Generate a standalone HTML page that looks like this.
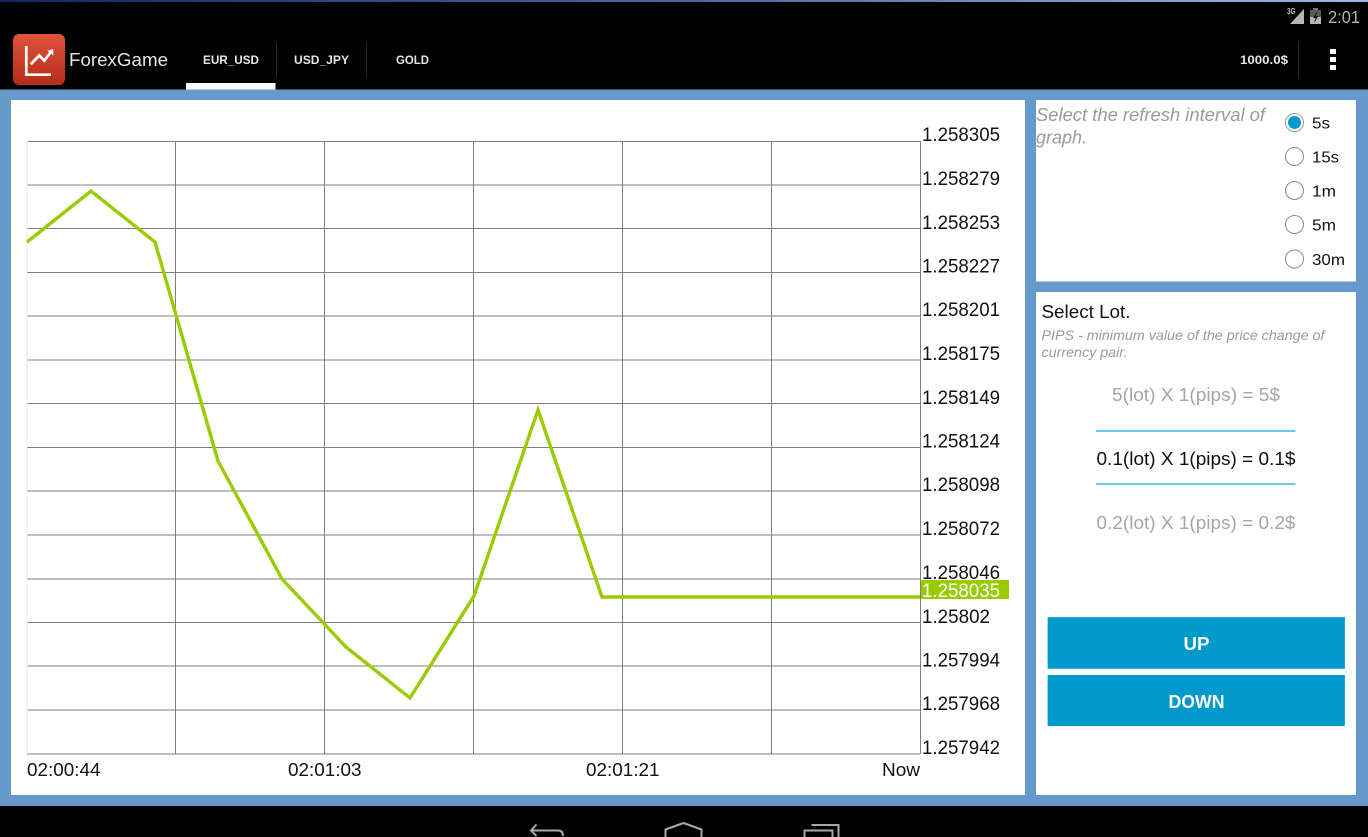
<!DOCTYPE html>
<html>
<head>
<meta charset="utf-8">
<style>
html,body{margin:0;padding:0;width:1368px;height:837px;overflow:hidden;background:#000}
svg{display:block;font-family:"Liberation Sans",sans-serif}
</style>
</head>
<body>
<svg width="1368" height="837" viewBox="0 0 1368 837" xmlns="http://www.w3.org/2000/svg">
<defs>
<linearGradient id="logo" x1="0" y1="0" x2="0" y2="1"><stop offset="0" stop-color="#e0533d"/><stop offset="1" stop-color="#b72c18"/></linearGradient>
<linearGradient id="strip" x1="0" y1="0" x2="1" y2="0"><stop offset="0" stop-color="#14265f"/><stop offset="0.5" stop-color="#456a9e"/><stop offset="1" stop-color="#93bde6"/></linearGradient>
</defs>
<rect width="1368" height="837" fill="#000"/>
<rect width="1368" height="2" fill="url(#strip)"/>

<!-- status bar -->
<text x="1287" y="14" font-size="8" font-weight="bold" fill="#c0c0c0" textLength="8.500" lengthAdjust="spacingAndGlyphs">3G</text>
<polygon points="1304,9 1304,24 1290,24" fill="#b5b5b5"/>
<rect x="1310" y="10" width="11" height="14" fill="#b5b5b5"/>
<rect x="1310" y="10" width="11" height="7" fill="#5a5a5a"/>
<rect x="1313" y="8" width="5" height="2" fill="#777"/>
<polygon points="1317.500,11 1313,18 1315.500,18 1314,23 1318.500,16 1316,16" fill="#111"/>
<text x="1328" y="23" font-size="17.5" fill="#b5b5b5" textLength="32" lengthAdjust="spacingAndGlyphs">2:01</text>

<!-- action bar -->
<rect x="13" y="34" width="52" height="51" rx="6" fill="url(#logo)"/>
<path d="M26.300 46V74.700H51" fill="none" stroke="#fff" stroke-width="2.700"/>
<path d="M30.700 64.300L39.300 55.500L44.300 60.700L51.200 51.500" fill="none" stroke="#fff" stroke-width="2.700"/>
<polygon points="47.300,50.700 53.300,49 53.300,55.500" fill="#fff"/>
<text x="69" y="66" font-size="18" fill="#e6e6e6" textLength="99" lengthAdjust="spacingAndGlyphs">ForexGame</text>

<text x="203" y="64" font-size="12" font-weight="bold" fill="#e6e6e6" textLength="56" lengthAdjust="spacingAndGlyphs">EUR_USD</text>
<rect x="186" y="83" width="89.500" height="6.500" fill="#fff"/>
<rect x="276" y="43" width="1" height="34" fill="#2b2b2b"/>
<text x="294" y="64" font-size="12" font-weight="bold" fill="#e6e6e6" textLength="55" lengthAdjust="spacingAndGlyphs">USD_JPY</text>
<rect x="366" y="43" width="1" height="34" fill="#2b2b2b"/>
<text x="396" y="64" font-size="12" font-weight="bold" fill="#e6e6e6" textLength="33" lengthAdjust="spacingAndGlyphs">GOLD</text>

<text x="1240" y="64" font-size="12" font-weight="bold" fill="#e6e6e6" textLength="48" lengthAdjust="spacingAndGlyphs">1000.0$</text>
<rect x="1298" y="43" width="1" height="34" fill="#2b2b2b"/>
<rect x="1330" y="49" width="6" height="5" fill="#fff"/>
<rect x="1330" y="57" width="6" height="5" fill="#fff"/>
<rect x="1330" y="65" width="6" height="5" fill="#fff"/>

<!-- background -->
<rect y="89.500" width="1368" height="716.500" fill="#6699cc"/>
<rect x="11" y="100" width="1014" height="695" fill="#fff"/>
<rect x="1036" y="100" width="320" height="181.500" fill="#fff"/>
<rect x="1036" y="292" width="320" height="503" fill="#fff"/>

<!-- grid -->
<g stroke="#7e7e7e" stroke-width="1" fill="none">
<path d="M27 141.500H920M27 185H920M27 228.500H920M27 272.500H920M27 316H920M27 360H920M27 403.500H920M27 447.500H920M27 491H920M27 535H920M27 579H920M27 622.500H920M27 666H920M27 710H920M27 754H920"/>
<path d="M175.500 141V754M324.500 141V754M473.500 141V754M622.500 141V754M771.500 141V754M920.500 141V754"/>
</g>
<path d="M27 141V754" stroke="#e6e6e6" stroke-width="1"/>

<polyline points="27,242 91,191 155,242 218,461 282,579 346,647 410,698 474,596 538,410 602,597 920,597" fill="none" stroke="#99cc00" stroke-width="3.400"/>

<!-- y labels -->
<g font-size="19" fill="#111">
<text x="922" y="141" textLength="78" lengthAdjust="spacingAndGlyphs">1.258305</text>
<text x="922" y="185" textLength="78" lengthAdjust="spacingAndGlyphs">1.258279</text>
<text x="922" y="229" textLength="78" lengthAdjust="spacingAndGlyphs">1.258253</text>
<text x="922" y="272.500" textLength="78" lengthAdjust="spacingAndGlyphs">1.258227</text>
<text x="922" y="316" textLength="78" lengthAdjust="spacingAndGlyphs">1.258201</text>
<text x="922" y="360" textLength="78" lengthAdjust="spacingAndGlyphs">1.258175</text>
<text x="922" y="404" textLength="78" lengthAdjust="spacingAndGlyphs">1.258149</text>
<text x="922" y="447.500" textLength="78" lengthAdjust="spacingAndGlyphs">1.258124</text>
<text x="922" y="491" textLength="78" lengthAdjust="spacingAndGlyphs">1.258098</text>
<text x="922" y="535" textLength="78" lengthAdjust="spacingAndGlyphs">1.258072</text>
<text x="922" y="579" textLength="78" lengthAdjust="spacingAndGlyphs">1.258046</text>
<text x="922" y="623" textLength="68" lengthAdjust="spacingAndGlyphs">1.25802</text>
<text x="922" y="666.500" textLength="78" lengthAdjust="spacingAndGlyphs">1.257994</text>
<text x="922" y="710" textLength="78" lengthAdjust="spacingAndGlyphs">1.257968</text>
<text x="922" y="754" textLength="78" lengthAdjust="spacingAndGlyphs">1.257942</text>
</g>
<rect x="921" y="580" width="88" height="19" fill="#99cc00"/>
<text x="922" y="597" font-size="19" fill="#fff" textLength="78" lengthAdjust="spacingAndGlyphs">1.258035</text>

<!-- x labels -->
<g font-size="18" fill="#111">
<text x="27" y="776" textLength="73.500" lengthAdjust="spacingAndGlyphs">02:00:44</text>
<text x="288" y="776" textLength="73.500" lengthAdjust="spacingAndGlyphs">02:01:03</text>
<text x="586" y="776" textLength="73.500" lengthAdjust="spacingAndGlyphs">02:01:21</text>
<text x="882" y="776" textLength="38" lengthAdjust="spacingAndGlyphs">Now</text>
</g>

<!-- refresh panel -->
<text x="1036" y="121" font-size="18" font-style="italic" fill="#9a9a9a" textLength="229" lengthAdjust="spacingAndGlyphs">Select the refresh interval of</text>
<text x="1036" y="143.500" font-size="18" font-style="italic" fill="#9a9a9a" textLength="51" lengthAdjust="spacingAndGlyphs">graph.</text>

<circle cx="1294.500" cy="122.500" r="9" fill="#fff" stroke="#9a9a9a" stroke-width="1"/>
<circle cx="1294.500" cy="122.500" r="6.500" fill="#0099cc"/>
<circle cx="1294.500" cy="156.500" r="9" fill="#fff" stroke="#8a8a8a" stroke-width="1"/>
<circle cx="1294.500" cy="190.500" r="9" fill="#fff" stroke="#8a8a8a" stroke-width="1"/>
<circle cx="1294.500" cy="224.500" r="9" fill="#fff" stroke="#8a8a8a" stroke-width="1"/>
<circle cx="1294.500" cy="259" r="9" fill="#fff" stroke="#8a8a8a" stroke-width="1"/>
<g font-size="16" fill="#111">
<text x="1312" y="128.500" textLength="18" lengthAdjust="spacingAndGlyphs">5s</text>
<text x="1312" y="162.500" textLength="27" lengthAdjust="spacingAndGlyphs">15s</text>
<text x="1312" y="196.500" textLength="24" lengthAdjust="spacingAndGlyphs">1m</text>
<text x="1312" y="230.500" textLength="24" lengthAdjust="spacingAndGlyphs">5m</text>
<text x="1312" y="265" textLength="33" lengthAdjust="spacingAndGlyphs">30m</text>
</g>

<!-- lot panel -->
<text x="1041.500" y="318" font-size="18" fill="#111" textLength="89" lengthAdjust="spacingAndGlyphs">Select Lot.</text>
<text x="1041.500" y="340" font-size="14" font-style="italic" fill="#9a9a9a" textLength="283" lengthAdjust="spacingAndGlyphs">PIPS - minimum value of the price change of</text>
<text x="1041.500" y="357" font-size="14" font-style="italic" fill="#9a9a9a" textLength="86" lengthAdjust="spacingAndGlyphs">currency pair.</text>

<text x="1112" y="401" font-size="18" fill="#a5a5a5" textLength="168" lengthAdjust="spacingAndGlyphs">5(lot) X 1(pips) = 5$</text>
<rect x="1096" y="430" width="199.500" height="2" fill="#66ccee"/>
<text x="1096.500" y="465" font-size="18" fill="#111" textLength="199" lengthAdjust="spacingAndGlyphs">0.1(lot) X 1(pips) = 0.1$</text>
<rect x="1096" y="483" width="199.500" height="2" fill="#66ccee"/>
<text x="1096.500" y="529" font-size="18" fill="#a5a5a5" textLength="199" lengthAdjust="spacingAndGlyphs">0.2(lot) X 1(pips) = 0.2$</text>

<!-- buttons -->
<rect x="1047.500" y="617" width="297.500" height="52" fill="#33b5e5"/>
<rect x="1048" y="617.500" width="296.500" height="50.500" fill="#0099cc"/>
<rect x="1047.500" y="675" width="297.500" height="51" fill="#33b5e5"/>
<rect x="1048" y="675" width="296.500" height="51" fill="#0099cc"/>
<text x="1183.500" y="650" font-size="18" font-weight="bold" fill="#fff" textLength="26" lengthAdjust="spacingAndGlyphs">UP</text>
<text x="1168.500" y="708" font-size="18" font-weight="bold" fill="#fff" textLength="56" lengthAdjust="spacingAndGlyphs">DOWN</text>

<!-- nav bar -->
<g fill="none" stroke="#a8a8a8" stroke-width="2">
<path d="M536.500 824.500L531 830.500L536.500 836"/>
<path d="M531 830.500H558Q563 830.500 563 836"/>
<path d="M665.500 838V829.500L683.500 823L701.500 829.500V838"/>
<path d="M804.500 838V830.500H832.500V838"/>
<path d="M811.500 825H838.500V838"/>
</g>
</svg>
</body>
</html>
